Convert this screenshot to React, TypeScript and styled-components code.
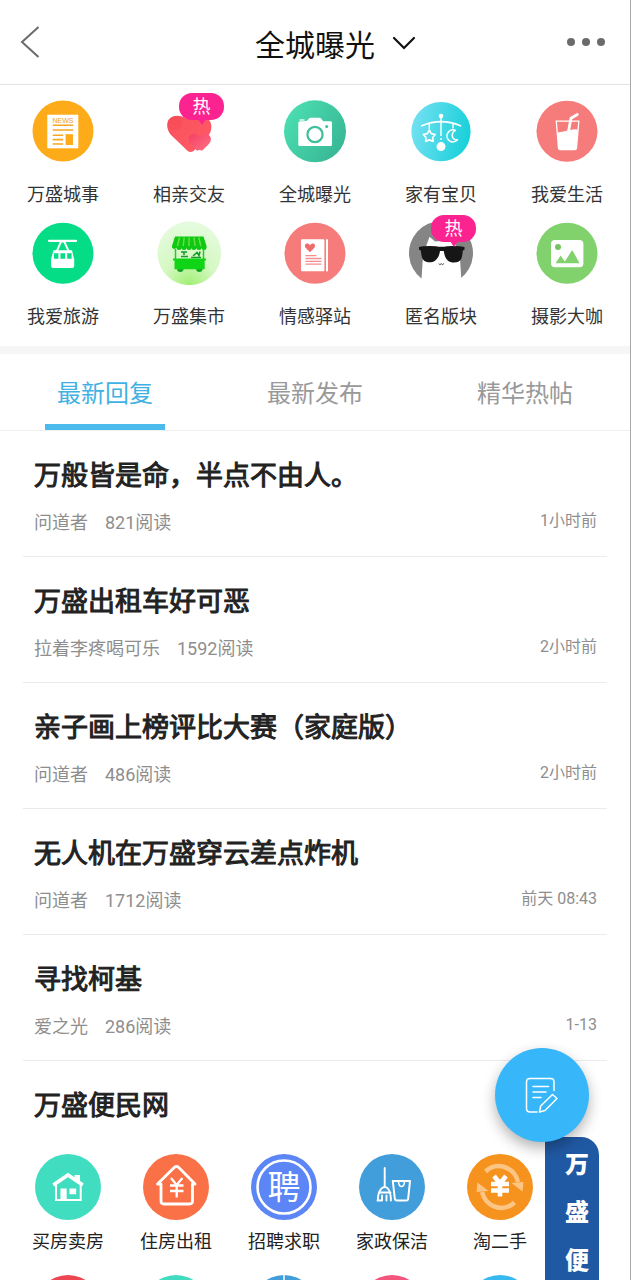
import React, { useState } from "react";
import styled, { createGlobalStyle } from "styled-components";

const GlobalStyle = createGlobalStyle`
  *, *::before, *::after { box-sizing: border-box; }
  body {
    margin: 0;
    background: #fff;
    font-family: Roboto, "Noto Sans CJK SC", sans-serif;
    color: #333;
  }
  button { font: inherit; border: 0; padding: 0; background: none; cursor: pointer; }
  a { color: inherit; text-decoration: none; }
  h1, h2, p, ul { margin: 0; padding: 0; }
  ul { list-style: none; }
  svg { display: block; }
`;

const Shell = styled.div`
  position: relative;
  display: flex;
  flex-direction: column;
  height: 100vh;
  overflow: hidden;
  border-right: 1px solid #a8a8a8;
`;

const Header = styled.header`
  display: grid;
  grid-template-columns: 60px 1fr 60px;
  align-items: center;
  flex: none;
  height: 85px;
  border-bottom: 1px solid #e3e3e3;
`;

const BackButton = styled.button`
  justify-self: start;
  padding-left: 20px;
`;

const MoreButton = styled.button`
  justify-self: end;
  padding-right: 24px;
`;

const TitleButton = styled.button`
  display: flex;
  align-items: center;
  justify-self: center;
  gap: 17px;
  padding: 7px 0 0 41px;
  color: #111;
`;

const TitleText = styled.h1`
  font-size: 30px;
  font-weight: 400;
  line-height: 40px;
`;

const Content = styled.main`
  flex: 1;
  min-height: 0;
  overflow-y: auto;
  scrollbar-width: none;
`;

const Boards = styled.nav`
  display: grid;
  grid-template-columns: repeat(5, 1fr);
  row-gap: 14px;
  padding: 14px 0 17px;
  border-bottom: 8px solid #f6f6f6;
`;

const BoardLink = styled.a`
  display: flex;
  flex-direction: column;
  align-items: center;
  gap: 20px;
`;

const BoardIcon = styled.span`
  position: relative;
  width: 64px;
  height: 64px;
`;

const Label = styled.span`
  font-size: 18px;
  line-height: 24px;
  height: 24px;
  white-space: nowrap;
`;

const HotBadge = styled.span`
  position: absolute;
  top: -6px;
  left: 22px;
  width: 45px;
  height: 27px;
  border-radius: 13px;
  background: #fb2390;
  color: #fff;
  font-size: 18px;
  line-height: 28px;
  text-align: center;
  &::after {
    content: "";
    position: absolute;
    top: 26px;
    left: 19px;
    border: 4px solid transparent;
    border-top: 6px solid #fb2390;
    border-bottom: 0;
  }
`;

const Tabs = styled.div`
  display: grid;
  grid-template-columns: repeat(3, 1fr);
  height: 77px;
  border-bottom: 1px solid #efefef;
`;

const Tab = styled.button<{ $active: boolean }>`
  display: flex;
  flex-direction: column;
  align-items: center;
  justify-content: space-between;
  padding-top: 22px;
  font-size: 24px;
  line-height: 36px;
  color: ${(p) => (p.$active ? "#41b1e4" : "#999")};
  &::after {
    content: "";
    width: 120px;
    height: 6px;
    background: ${(p) => (p.$active ? "#4dbaec" : "transparent")};
  }
`;

const Post = styled.li`
  margin: 0 23px;
  padding: 27px 10px 21px 11px;
  border-bottom: 1px solid #ebebeb;
`;

const Heading = styled.h2`
  color: #222;
  font-size: 27px;
  font-weight: 400;
  line-height: 36px;
  -webkit-text-stroke: 1px #222;
`;

const Meta = styled.div`
  display: flex;
  align-items: flex-start;
  gap: 17px;
  margin-top: 17px;
  color: #8e8e8e;
  font-size: 18px;
  line-height: 24px;
`;

const Time = styled.time`
  margin-left: auto;
  font-size: 16px;
  line-height: 20px;
`;

const Services = styled.section`
  padding-top: 27px;
`;

const ServicesHeading = styled(Heading)`
  padding: 0 34px;
`;

const ServiceGrid = styled.ul`
  display: grid;
  grid-template-columns: repeat(5, 1fr);
  row-gap: 21px;
  padding: 30px 76px 24px 14px;
`;

const ServiceLink = styled.a`
  display: flex;
  flex-direction: column;
  align-items: center;
  gap: 10px;
  color: #222;
`;

const Ribbon = styled.aside`
  position: absolute;
  right: 31px;
  bottom: 0;
  width: 54px;
  height: 143px;
  padding: 4px 0 0 10px;
  border-radius: 0 18px 0 0;
  background: #2059a3;
  color: #fff;
  font-size: 24px;
  font-weight: 900;
  line-height: 48px;
  text-align: center;
  overflow: hidden;
`;

const RibbonChar = styled.span`
  display: block;
`;

const Compose = styled.button`
  position: absolute;
  right: 41px;
  bottom: 138px;
  display: grid;
  place-items: center;
  width: 94px;
  height: 94px;
  border-radius: 50%;
  background: #37b7f9;
  box-shadow: 0 6px 14px rgba(0, 0, 0, 0.3);
`;

const Glyph = ({ size = 64, children }: { size?: number; children: React.ReactNode }) => (
  <svg width={size} height={size} viewBox={`0 0 ${size} ${size}`} fill="none" aria-hidden="true">
    {children}
  </svg>
);

const NewsIcon = () => (
  <Glyph>
    <circle cx="32" cy="32" r="30.5" fill="#fdab18" />
    <rect x="16.3" y="15.7" width="31" height="33.6" fill="#fff" />
    <text x="32" y="23.8" fontSize="7" textAnchor="middle" fontFamily="Liberation Sans, sans-serif" fill="#f0a020">
      NEWS
    </text>
    <path d="M21.7 26.2h20.5M21.7 31h20.5M21.7 36.2h10.5M21.7 40.6h10.5M21.7 45h10.5" stroke="#f5a623" strokeWidth="1.6" />
    <rect x="34.6" y="35.2" width="7.4" height="10.8" fill="#fdab18" />
  </Glyph>
);

const HeartsIcon = () => (
  <Glyph>
    <defs>
      <linearGradient id="heartBig" x1="0" y1="0" x2="1" y2="1">
        <stop offset="0" stopColor="#f9525c" />
        <stop offset="1" stopColor="#ff5a66" />
      </linearGradient>
      <linearGradient id="heartSmall" x1="0" y1="0" x2="1" y2="1">
        <stop offset="0" stopColor="#f43f66" />
        <stop offset="1" stopColor="#ff7383" />
      </linearGradient>
    </defs>
    <path
      d="M31 52.2L14 36C9 30 9 22 13.5 19C18 15.5 25 16.5 29 19.5C33 16 37 16 42 18C50 17 55 22 54.3 29C54 36 47 42 36.5 52Q33.5 53.8 31 52.2Z"
      fill="url(#heartBig)"
    />
    <circle cx="18" cy="24" r="7" fill="#f04450" opacity=".35" />
    <path
      d="M40 51.8L33.5 45C30.5 41 31.5 36.5 35.5 35C38.5 34 41 35.5 42.5 38C45 34.5 50 34 52.5 36.5C55 39.5 54 43 51 46L45 51.8Q42.5 50 40 51.8Z"
      fill="url(#heartSmall)"
    />
  </Glyph>
);

const CameraIcon = () => (
  <Glyph>
    <defs>
      <linearGradient id="cameraBg" x1="0" y1="0.2" x2="1" y2="0.8">
        <stop offset="0" stopColor="#4cdfb2" />
        <stop offset="1" stopColor="#37b593" />
      </linearGradient>
    </defs>
    <circle cx="32" cy="32.3" r="31" fill="url(#cameraBg)" />
    <path
      d="M17.5 22.3h3.5l3-.5 2-2.4q.5-.6 1.5-.6h9q1 0 1.600.7l2.100 2.800h7.300q1.500 0 1.500 1.500v21.700q0 1.500-1.500 1.500H16.800q-1.500 0-1.500-1.500V23.800q0-1.500 2.200-1.500Z"
      fill="#fff"
    />
    <path d="M16.5 21h5" stroke="#fff" strokeWidth="1.3" />
    <circle cx="32" cy="35.5" r="7.6" stroke="#3dbf9b" strokeWidth="2.2" />
    <circle cx="43.7" cy="27.5" r="1.5" fill="#3dbf9b" />
  </Glyph>
);

const MobileIcon = () => (
  <Glyph>
    <defs>
      <linearGradient id="mobileBg" x1="0" y1="0.4" x2="1" y2="0.6">
        <stop offset="0" stopColor="#73e0f1" />
        <stop offset="1" stopColor="#16d0da" />
      </linearGradient>
    </defs>
    <circle cx="32" cy="32.6" r="29.6" fill="url(#mobileBg)" />
    <circle cx="32" cy="17" r="2.3" fill="#fff" />
    <circle cx="32" cy="47.6" r="4.5" fill="#fff" />
    <path d="M12.8 26.8Q32 18.5 51.4 26.8" stroke="#fff" strokeWidth="1.7" strokeLinecap="round" />
    <path d="M32 19v18M32 39v2M20.3 24.5v6M44 24.5v5" stroke="#fff" strokeWidth="1.4" />
    <path
      d="M20.3 31.3l2 3.3 3.9.9-2.5 3 .4 3.9-3.8-1.5-3.6 1.5.2-3.9-2.5-3 3.9-.9Z"
      stroke="#fff"
      strokeWidth="1.7"
      strokeLinejoin="round"
    />
    <path d="M46.2 31.3a6 6 0 1 0 2.3 9.5c-6 .5-7-6.5-2.3-9.5Z" stroke="#fff" strokeWidth="1.6" strokeLinejoin="round" />
  </Glyph>
);

const DrinkIcon = () => (
  <Glyph>
    <circle cx="32" cy="32.3" r="30.5" fill="#f57c7b" />
    <path d="M21.3 22.2h22.5l-2.3 27q-.2 1.5-1.7 1.5H25.2q-1.5 0-1.7-1.5Z" stroke="#fff" strokeWidth="1.3" />
    <path d="M22.2 33.5q5-.5 9.5-1.800 7-2.300 11.300-1.200l-1.700 18.700q-.2 1.500-1.700 1.500H25.200q-1.500 0-1.700-1.500Z" fill="#fff" />
    <path d="M42.3 15.5l-6.3 3.7-2.5 13" stroke="#fff" strokeWidth="2.8" strokeLinecap="round" strokeLinejoin="round" />
  </Glyph>
);

const CableCarIcon = () => (
  <Glyph>
    <circle cx="32" cy="32.3" r="30.5" fill="#04dd85" />
    <path d="M18 19.8h27" stroke="#fff" strokeWidth="2.3" strokeLinecap="round" />
    <path d="M25.7 30.5L30 20.5h3.2l4.6 10" stroke="#fff" strokeWidth="1.9" />
    <path d="M22.5 29.3h18.500l2.200 9v6.700q0 2-2 2H22q-2 0-2-2v-6.700Z" fill="#fff" />
    <path d="M23 32.3h4.400v5.500h-4.400ZM29.500 32.300h4.600v5.500h-4.600ZM36.200 32.300h4.400v5.500h-4.400Z" fill="#04dd85" />
  </Glyph>
);

const MarketIcon = () => (
  <Glyph>
    <defs>
      <radialGradient id="marketBg" cx="0.5" cy="1" r="0.95">
        <stop offset="0" stopColor="#a0ef74" />
        <stop offset="0.45" stopColor="#d5f8c3" />
        <stop offset="1" stopColor="#e4fbdd" />
      </radialGradient>
    </defs>
    <circle cx="32.3" cy="32.3" r="31.8" fill="url(#marketBg)" />
    <path
      d="M18 15.5h28.500l3 9.500v1.500a2.500 2.500 0 0 1-5 0 2.500 2.500 0 0 1-5 0 2.500 2.500 0 0 1-5 0 2.500 2.500 0 0 1-5 0 2.500 2.500 0 0 1-5 0 2.500 2.500 0 0 1-5 0 2.500 2.500 0 0 1-4.500 0V25Z"
      fill="#0fc812"
    />
    <path d="M22.5 16.5l-2 8.500M27.200 16.500l-1 8.500M32 16.500v8.500M37 16.500l1 8.500M41.800 16.500l2 8.500" stroke="#64e045" strokeWidth="1.5" />
    <path d="M18.5 28v11M46.5 28v11" stroke="#22cc22" strokeWidth="1.5" />
    <path d="M24 31h6M27 31v3M24 35.5h7M36 35l4-3.5 2 3 1-4M34 36.5h10" stroke="#159c28" strokeWidth="1.6" />
    <circle cx="23.3" cy="47.800" r="3.2" fill="#12a322" />
    <circle cx="42.3" cy="47.800" r="3.2" fill="#12a322" />
    <path d="M16 37.5h33v2h-1.300v8.800H17.500v-8.800H16Z" fill="#10d516" />
  </Glyph>
);

const StoryIcon = () => (
  <Glyph>
    <circle cx="32" cy="32.3" r="30.5" fill="#f57c7b" />
    <rect x="18" y="18.3" width="23.4" height="32" rx="1" fill="#fff" />
    <rect x="43" y="18.3" width="2" height="32" fill="#fff" />
    <path d="M27 31.2l-4.200-4.200C20 23.500 24.500 20.500 27 24.200C29.500 20.500 34 23.500 31.200 27Z" fill="#ee6c6c" />
    <path d="M22.4 34.7h11M22.4 37.500h16M22.4 40.400h16M22.400 43.200h16" stroke="#f48d8d" strokeWidth="1.3" />
  </Glyph>
);

const CatIcon = () => (
  <Glyph>
    <path d="M12.5 57.5A32 32 0 1 1 51.5 57.5Z" fill="#858585" />
    <path d="M12.5 58L13.8 38L16.5 27L20.5 15.800L26 20.500Q32 19.500 38.500 20.500L44 16L47.500 27L51 38L52.300 58Z" fill="#fff" />
    <path
      d="M10 26l4-.8q8-.6 13 0 5.500 1 11 0 5-.6 13 0l4.500.8v2.800l-1.700.8c-.5 6-1 9.500-4.500 11.200-3.500 1.200-8 1-10.500-1.300-2.800-2.500-3.500-6-4-9.500h-3.800c-.5 4-2 7.500-5 9.700-3 2-7.500 2-10.500.3-2.500-1.700-3.200-5.500-3.700-10.400l-1.800-.8Z"
      fill="#161616"
    />
    <path d="M29.7 42.5q1 2 2.600.3 1.600 1.700 2.600-.3" stroke="#333" strokeWidth=".9" />
  </Glyph>
);

const PhotoIcon = () => (
  <Glyph>
    <circle cx="32" cy="32.3" r="30.5" fill="#81d16d" />
    <rect x="16" y="19" width="32.4" height="27.2" rx="4" fill="#fff" />
    <circle cx="23" cy="26" r="3" fill="#75c464" />
    <path d="M20.6 42.200l5-7.700 3.500 5 .8 1 6.600-10.500q.7-.8 1.300 0l6.800 12.200Z" fill="#81d16d" />
  </Glyph>
);

const HouseIcon = () => (
  <Glyph size={66}>
    <circle cx="33" cy="33" r="33" fill="#41ddc1" />
    <path d="M39.5 21h5.500v8l-5.500-4Z" fill="#fff" />
    <path d="M18.3 31L33 21l14.800 10" stroke="#fff" strokeWidth="3.6" />
    <path d="M21 29.5v16.500h24.700v-16.500" stroke="#fff" strokeWidth="2" />
    <path d="M25.5 34.5h6.200v11.500h-6.200ZM34.500 34.500h6.700v5.700h-6.700Z" fill="#fff" />
  </Glyph>
);

const RentIcon = () => (
  <Glyph size={66}>
    <circle cx="33" cy="33" r="33" fill="#fa7148" />
    <path
      d="M14.5 30l17-16.700q2-1.700 4 0L52 30h-2.500v17q0 3-3 3H21q-3 0-3-3V30Z"
      stroke="#fff"
      strokeWidth="2.8"
      strokeLinejoin="round"
    />
    <path d="M28 24l5.700 7 5.700-7M33.700 31v12.500M27 31.500h13.500M27 37h13.500" stroke="#fff" strokeWidth="2.3" />
  </Glyph>
);

const HiringIcon = () => (
  <Glyph size={66}>
    <circle cx="33" cy="33" r="33" fill="#5c85f5" />
    <circle cx="33" cy="33" r="26.5" stroke="#fff" strokeWidth="2.6" />
    <text x="33" y="45" fontSize="33" textAnchor="middle" fill="#fff">
      聘
    </text>
  </Glyph>
);

const CleaningIcon = () => (
  <Glyph size={66}>
    <circle cx="33" cy="33" r="33" fill="#429ddb" />
    <path
      d="M25.7 14v18M22.5 34.5q3.200-3 6.400 0 3 3.500 3 12M22.500 34.500q-3.500 3.500-3.700 12M20 38.500h11.500M23 46.500v-5M27.500 46.500v-5M18.500 46.500h4"
      stroke="#fff"
      strokeWidth="1.9"
      strokeLinecap="round"
    />
    <path d="M33.8 27h17.200l-1.800 17.500q-.2 2-2 2H38q-2 0-2.200-2Z" stroke="#fff" strokeWidth="2" strokeLinejoin="round" />
    <path d="M39.5 28q.5 4.500 3 4.500t3-4.500" stroke="#fff" strokeWidth="1.6" />
  </Glyph>
);

const SecondHandIcon = () => (
  <Glyph size={66}>
    <circle cx="33" cy="33" r="33" fill="#f6921e" />
    <path d="M18.5 17.5C29 7.5 47 12 51 28" stroke="#fdc583" strokeWidth="4.5" />
    <path d="M44.5 29l12-1-1 9.500Z" fill="#fdc583" />
    <path d="M47.5 48.5C37 58.5 19 54 15 38" stroke="#fdc583" strokeWidth="4.5" />
    <path d="M21.5 37l-12 1 1-9.500Z" fill="#fdc583" />
    <path d="M27 22l6 7.500 6-7.500M33 28v14.500M24 30h18M24 36.500h18" stroke="#fff" strokeWidth="4.6" />
  </Glyph>
);

const DotIcon = ({ color, line = false }: { color: string; line?: boolean }) => (
  <Glyph size={66}>
    <circle cx="33" cy="33" r="33" fill={color} />
    {line && <path d="M33 0v12" stroke="#fff" strokeWidth="1.5" />}
  </Glyph>
);

const boards = [
  { name: "万盛城事", icon: <NewsIcon /> },
  { name: "相亲交友", icon: <HeartsIcon />, hot: true },
  { name: "全城曝光", icon: <CameraIcon /> },
  { name: "家有宝贝", icon: <MobileIcon /> },
  { name: "我爱生活", icon: <DrinkIcon /> },
  { name: "我爱旅游", icon: <CableCarIcon /> },
  { name: "万盛集市", icon: <MarketIcon /> },
  { name: "情感驿站", icon: <StoryIcon /> },
  { name: "匿名版块", icon: <CatIcon />, hot: true },
  { name: "摄影大咖", icon: <PhotoIcon /> },
];

const tabs = ["最新回复", "最新发布", "精华热帖"];

const posts = [
  { title: "万般皆是命，半点不由人。", author: "问道者", views: 821, time: "1小时前" },
  { title: "万盛出租车好可恶", author: "拉着李疼喝可乐", views: 1592, time: "2小时前" },
  { title: "亲子画上榜评比大赛（家庭版）", author: "问道者", views: 486, time: "2小时前" },
  { title: "无人机在万盛穿云差点炸机", author: "问道者", views: 1712, time: "前天 08:43" },
  { title: "寻找柯基", author: "爱之光", views: 286, time: "1-13" },
];

const services = [
  { name: "买房卖房", icon: <HouseIcon /> },
  { name: "住房出租", icon: <RentIcon /> },
  { name: "招聘求职", icon: <HiringIcon /> },
  { name: "家政保洁", icon: <CleaningIcon /> },
  { name: "淘二手", icon: <SecondHandIcon /> },
  { name: "", icon: <DotIcon color="#ee4553" /> },
  { name: "", icon: <DotIcon color="#41dcc0" /> },
  { name: "", icon: <DotIcon color="#429ddb" line /> },
  { name: "", icon: <DotIcon color="#f4557c" /> },
  { name: "", icon: <DotIcon color="#36b9ef" /> },
];

export default function App() {
  const [active, setActive] = useState(0);
  return (
    <>
      <GlobalStyle />
      <Shell>
        <Header>
          <BackButton aria-label="返回">
            <svg width="20" height="32" viewBox="0 0 20 32" fill="none" stroke="#6b6b6b" strokeWidth="2">
              <path d="M18.5 1L2 16l16.500 15" />
            </svg>
          </BackButton>
          <TitleButton>
            <TitleText>全城曝光</TitleText>
            <svg width="24" height="20" viewBox="0 0 24 20" fill="none" stroke="#111" strokeWidth="2.2">
              <path d="M2 2l10 10L22 2" strokeLinecap="round" />
            </svg>
          </TitleButton>
          <MoreButton aria-label="更多">
            <svg width="40" height="10" viewBox="0 0 40 10" fill="#6b6b6b">
              <circle cx="5" cy="5" r="4" />
              <circle cx="20" cy="5" r="4" />
              <circle cx="35" cy="5" r="4" />
            </svg>
          </MoreButton>
        </Header>
        <Content>
          <Boards>
            {boards.map((b) => (
              <BoardLink key={b.name} href="#">
                <BoardIcon>
                  {b.icon}
                  {b.hot && <HotBadge>热</HotBadge>}
                </BoardIcon>
                <Label>{b.name}</Label>
              </BoardLink>
            ))}
          </Boards>
          <Tabs role="tablist">
            {tabs.map((t, i) => (
              <Tab key={t} role="tab" aria-selected={i === active} $active={i === active} onClick={() => setActive(i)}>
                {t}
              </Tab>
            ))}
          </Tabs>
          <ul>
            {posts.map((p) => (
              <Post key={p.title}>
                <a href="#">
                  <Heading>{p.title}</Heading>
                  <Meta>
                    <span>{p.author}</span>
                    <span>{p.views}阅读</span>
                    <Time>{p.time}</Time>
                  </Meta>
                </a>
              </Post>
            ))}
          </ul>
          <Services>
            <ServicesHeading>万盛便民网</ServicesHeading>
            <ServiceGrid>
              {services.map((s, i) => (
                <li key={i}>
                  <ServiceLink href="#">
                    {s.icon}
                    <Label>{s.name}</Label>
                  </ServiceLink>
                </li>
              ))}
            </ServiceGrid>
          </Services>
        </Content>
        <Ribbon>
          {["万", "盛", "便"].map((c) => (
            <RibbonChar key={c}>{c}</RibbonChar>
          ))}
        </Ribbon>
        <Compose aria-label="发帖">
          <svg
            width="36"
            height="38"
            viewBox="0 0 36 38"
            fill="none"
            stroke="#fff"
            strokeWidth="1.5"
            strokeLinecap="round"
            strokeLinejoin="round"
          >
            <path d="M13 36H6q-3.500 0-3.500-3.500V6q0-3.500 3.500-3.500h20.500q3.500 0 3.500 3.500v8.500" />
            <path d="M9 10.5h15.500M9 16h13M9 21.5h8" />
            <path d="M15.5 36l1.200-6L28.500 18.500l4.500 4L21 34.500Z" />
          </svg>
        </Compose>
      </Shell>
    </>
  );
}
